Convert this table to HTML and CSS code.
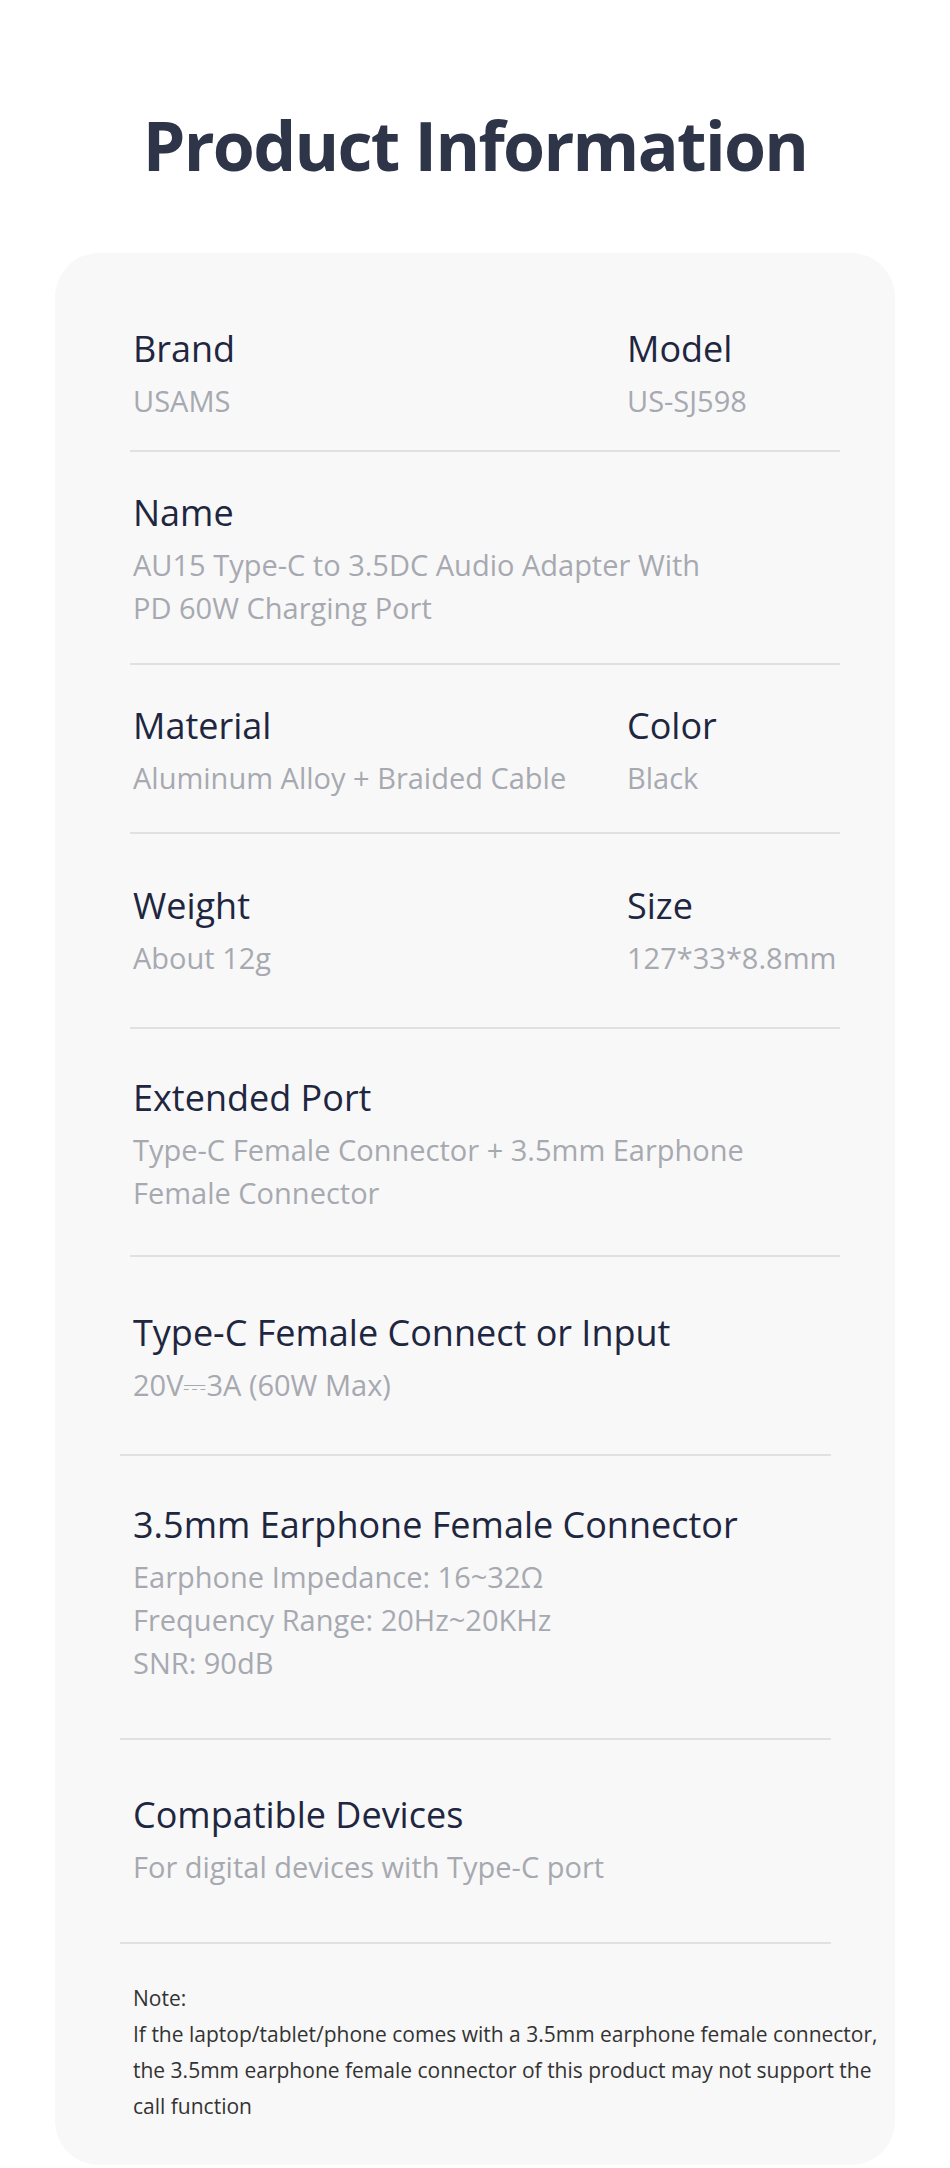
FILE: index.html
```html
<!DOCTYPE html>
<html lang="en">
<head>
    <meta charset="UTF-8">
    <meta name="viewport" content="width=device-width, initial-scale=1.0">
    <title>Product Information</title>
    <link rel="stylesheet" href="styles.css">
</head>
<body>
    <h1 class="title">Product Information</h1>

    <div class="card">
        <div class="row row-first two-col">
            <div class="field">
                <div class="label">Brand</div>
                <div class="value">USAMS</div>
            </div>
            <div class="field">
                <div class="label">Model</div>
                <div class="value">US-SJ598</div>
            </div>
        </div>

        <div class="row row-name">
            <div class="label">Name</div>
            <div class="value">AU15 Type-C to 3.5DC Audio Adapter With<br>PD 60W Charging Port</div>
        </div>

        <div class="row row-material two-col">
            <div class="field">
                <div class="label">Material</div>
                <div class="value">Aluminum Alloy + Braided Cable</div>
            </div>
            <div class="field">
                <div class="label">Color</div>
                <div class="value">Black</div>
            </div>
        </div>

        <div class="row row-weight two-col">
            <div class="field">
                <div class="label">Weight</div>
                <div class="value">About 12g</div>
            </div>
            <div class="field">
                <div class="label">Size</div>
                <div class="value">127*33*8.8mm</div>
            </div>
        </div>

        <div class="row row-ext">
            <div class="label">Extended Port</div>
            <div class="value">Type-C Female Connector + 3.5mm Earphone<br>Female Connector</div>
        </div>

        <div class="row row-shift row-input">
            <div class="label">Type-C Female Connect or Input</div>
            <div class="value">20V⎓3A (60W Max)</div>
        </div>

        <div class="row row-shift row-audio">
            <div class="label">3.5mm Earphone Female Connector</div>
            <div class="value">Earphone Impedance: 16~32Ω<br>Frequency Range: 20Hz~20KHz<br>SNR: 90dB</div>
        </div>

        <div class="row row-shift row-compat">
            <div class="label">Compatible Devices</div>
            <div class="value">For digital devices with Type-C port</div>
        </div>

        <div class="note">
            Note:<br>
            If the laptop/tablet/phone comes with a 3.5mm earphone female connector, the 3.5mm earphone female connector of this product may not support the call function
        </div>
    </div>
</body>
</html>
```

FILE: styles.css
```css
body {
    margin: 0;
    background: #ffffff;
    font-family: 'Open Sans', 'Noto Sans', sans-serif;
}

.title {
    margin: 111px 0 74px;
    text-align: center;
    font-size: 68px;
    line-height: 1;
    font-weight: 700;
    letter-spacing: -1.7px;
    color: #2e3548;
}

.card {
    margin: 0 55px;
    padding: 24px 0 0;
    background-color: #f8f8f8;
    border-radius: 44px;
    min-height: 1912px;
    box-sizing: border-box;
}

.row {
    margin: 0 55px 0 75px;
    padding: 50px 0 50px 3px;
    border-bottom: 2px solid #e1e1e1;
}

.row-first {
    padding-bottom: 28px;
}

.row-name {
    padding-top: 39px;
    padding-bottom: 34px;
}

.row-material {
    padding-top: 39px;
    padding-bottom: 33px;
}

.row-weight {
    padding-bottom: 48px;
}

.row-ext {
    padding-top: 47px;
    padding-bottom: 41px;
}

/* lower rows sit a little further left in the source image */
.row-shift {
    margin: 0 64px 0 65px;
    padding-left: 13px;
}

.row-input {
    padding-top: 54px;
    padding-bottom: 48px;
}

.row-audio {
    padding-top: 47px;
    padding-bottom: 54px;
}

.row-compat {
    padding-top: 53px;
    padding-bottom: 54px;
}

.two-col {
    display: grid;
    grid-template-columns: 494px 1fr;
}

.label {
    font-size: 36px;
    line-height: 44px;
    color: #1e2640;
}

.value {
    margin-top: 8px;
    font-size: 29px;
    line-height: 43px;
    color: #a7a9b1;
}

.note {
    padding: 36px 6px 41px 78px;
    font-size: 21px;
    line-height: 36px;
    color: #333333;
}
```
